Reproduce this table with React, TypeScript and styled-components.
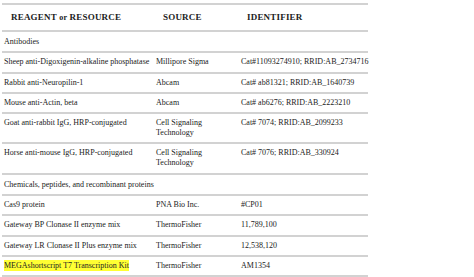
import React from 'react'
import styled, { createGlobalStyle } from 'styled-components'

const GlobalStyle = createGlobalStyle`
    body {
        margin: 0;
        background: #ffffff;
        font-family: 'Liberation Serif', 'DejaVu Serif', serif;
        color: #222;
    }
`

interface RowData {
    reagent: string
    source?: string
    id?: string
    highlight?: boolean
}

type Entry = RowData | { section: string }

const entries: Entry[] = [
    { section: 'Antibodies' },
    { reagent: 'Sheep anti-Digoxigenin-alkaline phosphatase', source: 'Millipore Sigma', id: 'Cat#11093274910; RRID:AB_2734716' },
    { reagent: 'Rabbit anti-Neuropilin-1', source: 'Abcam', id: 'Cat# ab81321; RRID:AB_1640739' },
    { reagent: 'Mouse anti-Actin, beta', source: 'Abcam', id: 'Cat# ab6276; RRID:AB_2223210' },
    { reagent: 'Goat anti-rabbit IgG, HRP-conjugated', source: 'Cell Signaling Technology', id: 'Cat# 7074; RRID:AB_2099233' },
    { reagent: 'Horse anti-mouse IgG, HRP-conjugated', source: 'Cell Signaling Technology', id: 'Cat# 7076; RRID:AB_330924' },
    { section: 'Chemicals, peptides, and recombinant proteins' },
    { reagent: 'Cas9 protein', source: 'PNA Bio Inc.', id: '#CP01' },
    { reagent: 'Gateway BP Clonase II enzyme mix', source: 'ThermoFisher', id: '11,789,100' },
    { reagent: 'Gateway LR Clonase II Plus enzyme mix', source: 'ThermoFisher', id: '12,538,120' },
    { reagent: 'MEGAshortscript T7 Transcription Kit', source: 'ThermoFisher', id: 'AM1354', highlight: true },
]

const App: React.FC = () => {
    return (
        <>
            <GlobalStyle />
            <Table>
                <HeaderRow>
                    <HeadCell>REAGENT <Lower>or</Lower> RESOURCE</HeadCell>
                    <HeadCell>SOURCE</HeadCell>
                    <HeadCell>IDENTIFIER</HeadCell>
                </HeaderRow>
                {entries.map((entry, i) => {
                    if ('section' in entry) {
                        return (
                            <SectionRow key={i}>
                                <Cell>{entry.section}</Cell>
                            </SectionRow>
                        )
                    }
                    return (
                        <Row key={i}>
                            <Cell>{entry.highlight ? <Mark>{entry.reagent}</Mark> : entry.reagent}</Cell>
                            <SourceCell>{entry.source}</SourceCell>
                            <Cell>{entry.id}</Cell>
                        </Row>
                    )
                })}
            </Table>
        </>
    )
}

export default App

const Table = styled.div`
    width: 366px;
    margin: 3px 0 0 2px;
    border-top: 2px solid #d2d2d2;
`

const Row = styled.div`
    display: grid;
    grid-template-columns: 152px 85px 1fr;
    border-bottom: 2px solid #d2d2d2;
    padding: 4px 0 4.3px 2px;
    font-size: 8px;
    line-height: 10px;
`

const HeaderRow = styled(Row)`
    padding: 8px 0 8px 9px;
    grid-template-columns: 152px 84px 1fr;
    font-size: 9px;
    line-height: 9px;
`

const SectionRow = styled(Row)`
    grid-template-columns: 1fr;
    padding-top: 5px;
`

const HeadCell = styled.div`
    font-weight: bold;
    letter-spacing: 0.2px;
    white-space: nowrap;
`

const Lower = styled.span`
    font-size: 8px;
`

const Cell = styled.div`
    white-space: nowrap;
`

const SourceCell = styled.div`
    max-width: 70px;
`

const Mark = styled.span`
    background: #ffff33;
    padding: 1px 0;
`
